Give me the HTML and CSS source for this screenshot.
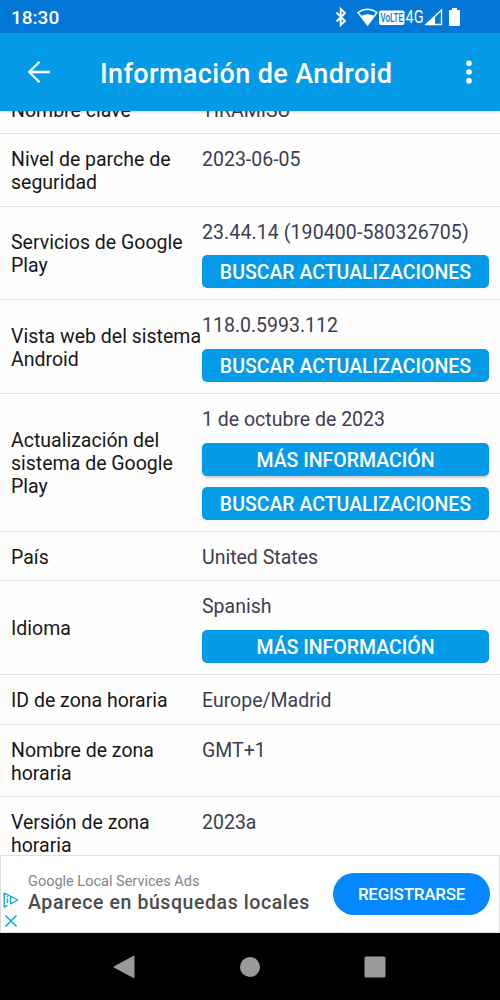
FILE: index.html
```html
<!DOCTYPE html>
<html lang="es">
<head>
<meta charset="utf-8">
<title>Información de Android</title>
<link rel="stylesheet" href="styles.css">
</head>
<body>
<div class="screen">
  <div class="status">
    <span class="clock">18:30</span>
    <svg class="status-icons" viewBox="0 0 132 33" width="132" height="33">
      <path d="M2.500 12.500l8.500 8.500-4.300 4V9l4.300 4-8.500 8.500" fill="none" stroke="#fff" stroke-width="1.900"/>
      <path d="M24 12.500q9.500-6.500 19 0L33.500 25z" fill="none" stroke="#fff" stroke-width="1.500"/>
      <path d="M27 16q6.500-3.500 13.500 0L33.500 25z" fill="#fff"/>
      <rect x="45" y="10.500" width="25.500" height="14.500" rx="2" fill="#fff"/>
      <text class="volte" x="46.500" y="22.300" textLength="22.500" lengthAdjust="spacingAndGlyphs">VoLTE</text>
      <text class="network" x="71.500" y="23.300" textLength="18" lengthAdjust="spacingAndGlyphs">4G</text>
      <path d="M92 24.500L107.500 10v14.500z" fill="none" stroke="#fff" stroke-width="1.400"/>
      <path d="M91 25l10-9v9z" fill="#fff"/>
      <path d="M118 8h5v2h2q1 0 1 1v14q0 1-1 1h-9q-1 0-1-1V11q0-1 1-1h2z" fill="#fff"/>
    </svg>
  </div>
  <header class="appbar">
    <svg class="back" viewBox="0 0 24 24" width="24" height="24"><path d="M23 12H2M12.500 1.800L2.300 12l10.200 10.200" fill="none" stroke="#fff" stroke-width="2.300"/></svg>
    <h1 class="title">Información de Android</h1>
    <svg class="more" viewBox="0 0 6 24" width="6" height="24" fill="#fff"><circle cx="3" cy="3.200" r="2.800"/><circle cx="3" cy="12" r="2.800"/><circle cx="3" cy="20.700" r="2.800"/></svg>
  </header>
  <main class="list">
    <div class="row clipped"><div class="label">Nombre clave</div><div class="value">TIRAMISU</div></div>
    <div class="row double"><div class="label">Nivel de parche de<br>seguridad</div><div class="value">2023-06-05</div></div>
    <div class="row action short"><div class="label">Servicios de Google<br>Play</div><div class="value wide">23.44.14 (190400-580326705)<button class="btn">BUSCAR ACTUALIZACIONES</button></div></div>
    <div class="row action tall"><div class="label">Vista web del sistema<br>Android</div><div class="value">118.0.5993.112<button class="btn">BUSCAR ACTUALIZACIONES</button></div></div>
    <div class="row actions tall"><div class="label">Actualización del<br>sistema de Google<br>Play</div><div class="value">1 de octubre de 2023<button class="btn raised">MÁS INFORMACIÓN</button><button class="btn">BUSCAR ACTUALIZACIONES</button></div></div>
    <div class="row single"><div class="label">País</div><div class="value">United States</div></div>
    <div class="row action tall"><div class="label">Idioma</div><div class="value">Spanish<button class="btn">MÁS INFORMACIÓN</button></div></div>
    <div class="row single"><div class="label">ID de zona horaria</div><div class="value">Europe/Madrid</div></div>
    <div class="row double compact"><div class="label">Nombre de zona<br>horaria</div><div class="value">GMT+1</div></div>
    <div class="row double"><div class="label">Versión de zona<br>horaria</div><div class="value">2023a</div></div>
  </main>
  <aside class="ad">
    <div class="ad-marks">
      <svg viewBox="0 0 16 16" width="16" height="16" fill="none" stroke="#12aed8"><path d="M4.500 13.500L1.200 15V1L14.800 8 7.500 11.800V4.800" stroke-width="1.400" stroke-linejoin="round"/><path d="M4.500 6.500V11M4.500 3.800v1.400" stroke-width="1.400"/></svg>
      <svg viewBox="0 0 16 16" width="16" height="16"><path d="M2.500 2.500l11 11M13.500 2.500l-11 11" stroke="#12aed8" stroke-width="1.700"/></svg>
    </div>
    <div class="ad-copy">
      <div class="ad-source">Google Local Services Ads</div>
      <div class="ad-title">Aparece en búsquedas locales</div>
    </div>
    <button class="cta">REGISTRARSE</button>
  </aside>
  <nav class="navbar">
    <svg viewBox="0 0 24 24" width="24" height="24" fill="#999"><path d="M1.200 11.200L20.500 .7q1-.5 1 .7v21q0 1.200-1 .7L1.200 12.800q-1.200-.8 0-1.600z"/></svg>
    <svg viewBox="0 0 24 24" width="24" height="24" fill="#999"><circle cx="12" cy="12" r="10"/></svg>
    <svg viewBox="0 0 24 24" width="24" height="24" fill="#999"><rect x="1.500" y="1.500" width="21" height="21" rx="1.500"/></svg>
  </nav>
</div>
</body>
</html>
```
FILE: styles.css
```css
* { box-sizing: border-box; }
body { margin: 0; font-family: Roboto, "Liberation Sans", sans-serif; }
button { border: 0; font-family: inherit; }
.screen { width: 500px; height: 1000px; display: flex; flex-direction: column; overflow: hidden; background: #fefefe; }
.status { height: 33px; flex: none; background: #0277d7; color: #fff; display: flex; align-items: center; justify-content: space-between; padding: 0 34px 0 11px; }
.clock { font-size: 19px; font-weight: 500; line-height: 33px; padding-top: 2px; }
.status-icons { display: block; }
.volte { font-size: 12px; font-weight: 500; fill: #0277d7; }
.network { font-size: 18px; fill: #fff; }
.appbar { height: 78px; flex: none; background: #039be8; color: #fff; display: flex; align-items: center; padding: 0 28px 0 27px; box-shadow: 0 1px 3px rgba(0,0,0,.2); z-index: 1; }
.title { margin: 0; padding: 4px 0 0 49px; flex: 1; font-size: 27px; letter-spacing: .38px; font-weight: 500; line-height: 34px; white-space: nowrap; }
.list { flex: 1; min-height: 0; overflow: hidden; font-size: 19.5px; line-height: 23px; }
.row { display: flex; border-bottom: 1px solid #e6e6e6; padding-left: 11px; align-items: center; }
.label { width: 191px; flex: none; white-space: nowrap; color: #171717; padding-top: 2px; }
.value { width: 287px; flex: none; color: #3d3d52; align-self: flex-start; padding-top: 14px; white-space: nowrap; }
.wide { letter-spacing: .1px; }
.clipped { height: 49px; margin-top: -26px; }
.single { height: 49px; }
.double { height: 73px; }
.compact { height: 72px; }
.action { height: 94px; }
.short { height: 93px; }
.actions { height: 138px; }
.single:nth-child(8) { height: 50px; }
.btn { display: block; width: 287px; height: 33px; margin: 11px 0 0; padding: 2px 0 0; border-radius: 5px; background: #039be8; color: #fff; font-size: 19.5px; font-weight: 500; line-height: 31px; letter-spacing: 0; }
.tall .value .btn:first-of-type { margin-top: 12px; }
.raised { box-shadow: 0 2px 3px rgba(0,0,0,.2); }
.ad { height: 78px; flex: none; display: flex; align-items: center; background: #fff; border: 1px solid #dedede; padding-right: 9px; }
.ad-marks { width: 27px; padding: 32px 0 0 2px; display: flex; flex-direction: column; gap: 5px; }
.ad-copy { flex: 1; white-space: nowrap; padding-bottom: 1px; }
.ad-source { font-size: 14.5px; line-height: 18px; color: #858585; }
.ad-title { font-size: 19.5px; line-height: 23px; font-weight: 500; letter-spacing: .58px; color: #4b4b4b; }
.cta { width: 157px; height: 42px; border-radius: 21px; padding: 0; background: #0587ff; color: #fff; font-size: 17px; letter-spacing: -.25px; font-weight: 500; }
.navbar { height: 67px; flex: none; background: #000; display: flex; justify-content: center; align-items: center; gap: 101px; }
```
